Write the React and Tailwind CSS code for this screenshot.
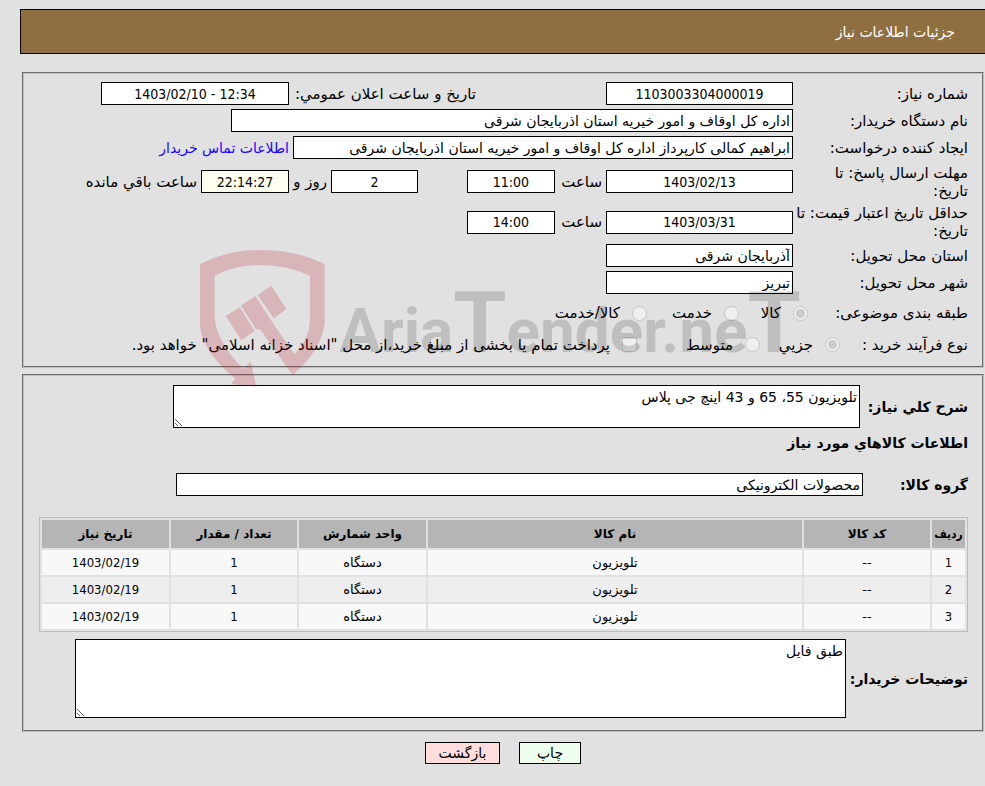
import React from "react";

const box = "h-[23px] border border-black px-[2px] text-[14px] text-black";
const condensed = "font-['DejaVu_Sans_Condensed','DejaVu_Sans',sans-serif]";

function Field({ id, value, className = "", bg = "bg-white", ltr = false, label }) {
  return (
    <input
      id={id}
      readOnly
      aria-label={label}
      dir={ltr ? "ltr" : "rtl"}
      defaultValue={value}
      className={`${box} ${bg} ${ltr ? `text-center ${condensed}` : ""} ${className}`}
    />
  );
}

function Row({ label, htmlFor, className = "h-[27px]", children }) {
  return (
    <div className={`flex items-center ${className}`}>
      <label htmlFor={htmlFor} className="w-[175px] shrink-0 leading-[18px]">
        {label}
      </label>
      {children}
    </div>
  );
}

function Choice({ type = "radio", name, label, checked = false, className = "" }) {
  return (
    <label className={`flex shrink-0 items-center gap-3 whitespace-nowrap ${className}`}>
      <input type={type} name={name} disabled defaultChecked={checked} className="size-[15px] shrink-0" />
      <span>{label}</span>
    </label>
  );
}

function Watermark() {
  return (
    <svg
      aria-hidden="true"
      viewBox="0 0 1950 480"
      className="pointer-events-none absolute top-[161px] left-[156px] h-[160px] w-[650px]"
    >
      <g fill="#b91c28" fillOpacity="0.22">
        <path d="M60 88Q140 45 245 45Q350 45 434 88V265Q425 345 338 420L240 283H228L183 212L226 183L273 256L343 358Q390 310 390 250V122Q320 90 245 90Q165 90 104 122V250Q112 325 190 402L212 380L229 455L152 447L167 432Q60 345 60 265Z" />
        <path d="M137 243L179 217L224 288L184 315Z" />
        <path d="M233 180L274 152L319 222L281 250Z" />
      </g>
      <text
        direction="ltr"
        x="478"
        y="350"
        fill="#000"
        fillOpacity="0.15"
        fontFamily="Roboto, 'Liberation Sans', sans-serif"
        fontWeight="700"
        fontSize="186"
      >
        Aria<tspan fontSize="258">T</tspan>ender.ne<tspan fontSize="258">T</tspan>
      </text>
    </svg>
  );
}

const items = [1, 2, 3];
const th = "h-7 bg-[#b5b5b5] p-0 text-[12px] font-bold whitespace-nowrap";

export default function App() {
  return (
    <div
      dir="rtl"
      className="min-h-screen bg-[#e1e1e1] pt-[9px] pb-5 font-['DejaVu_Sans',sans-serif] text-[14px] leading-[18px] text-black"
    >
      <header className="ml-5 flex h-[45px] items-center border-y border-l border-black bg-[#8f6e40] pr-[30px]">
        <h1 className="text-white">جزئیات اطلاعات نیاز</h1>
      </header>

      <fieldset className="relative mt-[18px] mr-px ml-[22px] border-2 border-[#c0c0c0] [border-style:groove] pt-[6px] pr-[14px] pb-[7px] text-[15px]">
        <Row label="شماره نیاز:" htmlFor="need">
          <Field id="need" ltr value="1103003304000019" className="w-[187px]" />
          <label htmlFor="announce" className="mr-[130px] w-[187px] shrink-0 whitespace-nowrap">
            تاريخ و ساعت اعلان عمومي:
          </label>
          <Field id="announce" ltr value="1403/02/10 - 12:34" className="w-[188px]" />
        </Row>
        <Row label="نام دستگاه خریدار:" htmlFor="buyer">
          <Field id="buyer" value="اداره کل اوقاف و امور خیریه استان اذربایجان شرقی" className="w-[562px]" />
        </Row>
        <Row label="ایجاد کننده درخواست:" htmlFor="creator">
          <Field
            id="creator"
            value="ابراهیم کمالی کارپرداز اداره کل اوقاف و امور خیریه استان اذربایجان شرقی"
            className="w-[500px]"
          />
          <a href="#contact" className="mr-1 text-[14px] whitespace-nowrap text-[#1a00ff]">
            اطلاعات تماس خریدار
          </a>
        </Row>
        <Row label={<>مهلت ارسال پاسخ: تا<br />تاریخ:</>} htmlFor="deadline" className="h-[41px]">
          <Field id="deadline" ltr value="1403/02/13" className="w-[187px]" />
          <label htmlFor="deadline-time" className="w-[51px] shrink-0 pr-1">ساعت</label>
          <Field id="deadline-time" ltr value="11:00" className="w-[88px]" />
          <Field id="days" ltr label="روز" value="2" className="mr-[49px] w-[87px]" />
          <label htmlFor="days" className="w-[42px] shrink-0 pr-1 whitespace-nowrap">روز و</label>
          <Field id="remaining" ltr value="22:14:27" bg="bg-[#fffff0]" className="w-[88px]" />
          <label htmlFor="remaining" className="mr-1 whitespace-nowrap">ساعت باقي مانده</label>
        </Row>
        <Row
          label={<span className="whitespace-nowrap">حداقل تاریخ اعتبار قیمت: تا<br />تاریخ:</span>}
          htmlFor="validity"
          className="h-10"
        >
          <Field id="validity" ltr value="1403/03/31" className="w-[187px]" />
          <label htmlFor="validity-time" className="w-[51px] shrink-0 pr-1">ساعت</label>
          <Field id="validity-time" ltr value="14:00" className="w-[88px]" />
        </Row>
        <Row label="استان محل تحویل:" htmlFor="province">
          <Field id="province" value="آذربایجان شرقی" className="w-[187px]" />
        </Row>
        <Row label="شهر محل تحویل:" htmlFor="city">
          <Field id="city" value="تبریز" className="w-[187px]" />
        </Row>
        <div className="flex h-[34px] items-center">
          <span className="w-40 shrink-0">طبقه بندی موضوعی:</span>
          <Choice name="category" label="كالا" checked className="w-[69px]" />
          <Choice name="category" label="خدمت" className="w-[92px]" />
          <Choice name="category" label="كالا/خدمت" />
        </div>
        <div className="flex h-[29px] items-center">
          <span className="w-32 shrink-0">نوع فرآیند خرید :</span>
          <Choice name="process" label="جزیي" checked className="w-20" />
          <Choice name="process" label="متوسط" className="w-[123px]" />
          <Choice
            type="checkbox"
            name="treasury"
            label={'پرداخت تمام یا بخشی از مبلغ خرید،از محل "اسناد خزانه اسلامی" خواهد بود.'}
          />
        </div>
        <Watermark />
      </fieldset>

      <fieldset className="mt-[6px] mr-px ml-[22px] border-2 border-[#c0c0c0] [border-style:groove] pt-[9px] pr-[14px] pb-3 pl-[15px]">
        <div className="flex items-center">
          <label htmlFor="summary" className="w-[108px] shrink-0 whitespace-nowrap font-bold">شرح كلي نیاز:</label>
          <textarea
            id="summary"
            readOnly
            defaultValue="تلویزیون 55، 65 و 43 اینچ جی پلاس"
            className="ml-[134px] h-[43px] min-w-0 flex-1 border border-black bg-white p-[2px]"
          />
        </div>
        <h2 className="mt-[6px] font-bold">اطلاعات كالاهاي مورد نیاز</h2>
        <div className="mt-[21px] flex items-center">
          <label htmlFor="group" className="w-[105px] shrink-0 font-bold">گروه کالا:</label>
          <Field id="group" value="محصولات الکترونیکی" className="ml-[137px] min-w-0 flex-1" />
        </div>
        <table className="mt-[21px] w-full table-fixed border-separate border-spacing-[2px] border border-[#bdbdbd] text-center text-[13px]">
          <colgroup>
            <col className="w-[33px]" />
            <col className="w-[126px]" />
            <col />
            <col className="w-[127px]" />
            <col className="w-[126px]" />
            <col className="w-[127px]" />
          </colgroup>
          <thead>
            <tr>
              <th className={`${th} ${condensed}`}>ردیف</th>
              <th className={th}>کد کالا</th>
              <th className={th}>نام کالا</th>
              <th className={th}>واحد شمارش</th>
              <th className={th}>تعداد / مقدار</th>
              <th className={th}>تاریخ نیاز</th>
            </tr>
          </thead>
          <tbody>
            {items.map((n) => (
              <tr key={n} className="h-[25px] bg-[#f8f8f8] even:bg-[#eeeeee]">
                <td className={`p-0 ${condensed}`}>{n}</td>
                <td className="p-0">--</td>
                <td className="p-0">تلویزیون</td>
                <td className="p-0">دستگاه</td>
                <td className={`p-0 ${condensed}`}>1</td>
                <td className={`p-0 ${condensed}`}>1403/02/19</td>
              </tr>
            ))}
          </tbody>
        </table>
        <div className="mt-[7px] flex items-center">
          <label htmlFor="notes" className="w-[122px] shrink-0 whitespace-nowrap font-bold">توضیحات خریدار:</label>
          <textarea
            id="notes"
            readOnly
            defaultValue="طبق فایل"
            className="ml-9 h-[79px] min-w-0 flex-1 border border-black bg-white p-[2px]"
          />
        </div>
      </fieldset>

      <div className="mt-[10px] mr-px ml-[22px] flex justify-center gap-[19px]">
        <button type="button" className="h-[22px] w-[62px] border border-black bg-[#eeffee]">چاپ</button>
        <button type="button" className="h-[22px] w-[75px] border border-black bg-[#ffdddd]">بازگشت</button>
      </div>
    </div>
  );
}
